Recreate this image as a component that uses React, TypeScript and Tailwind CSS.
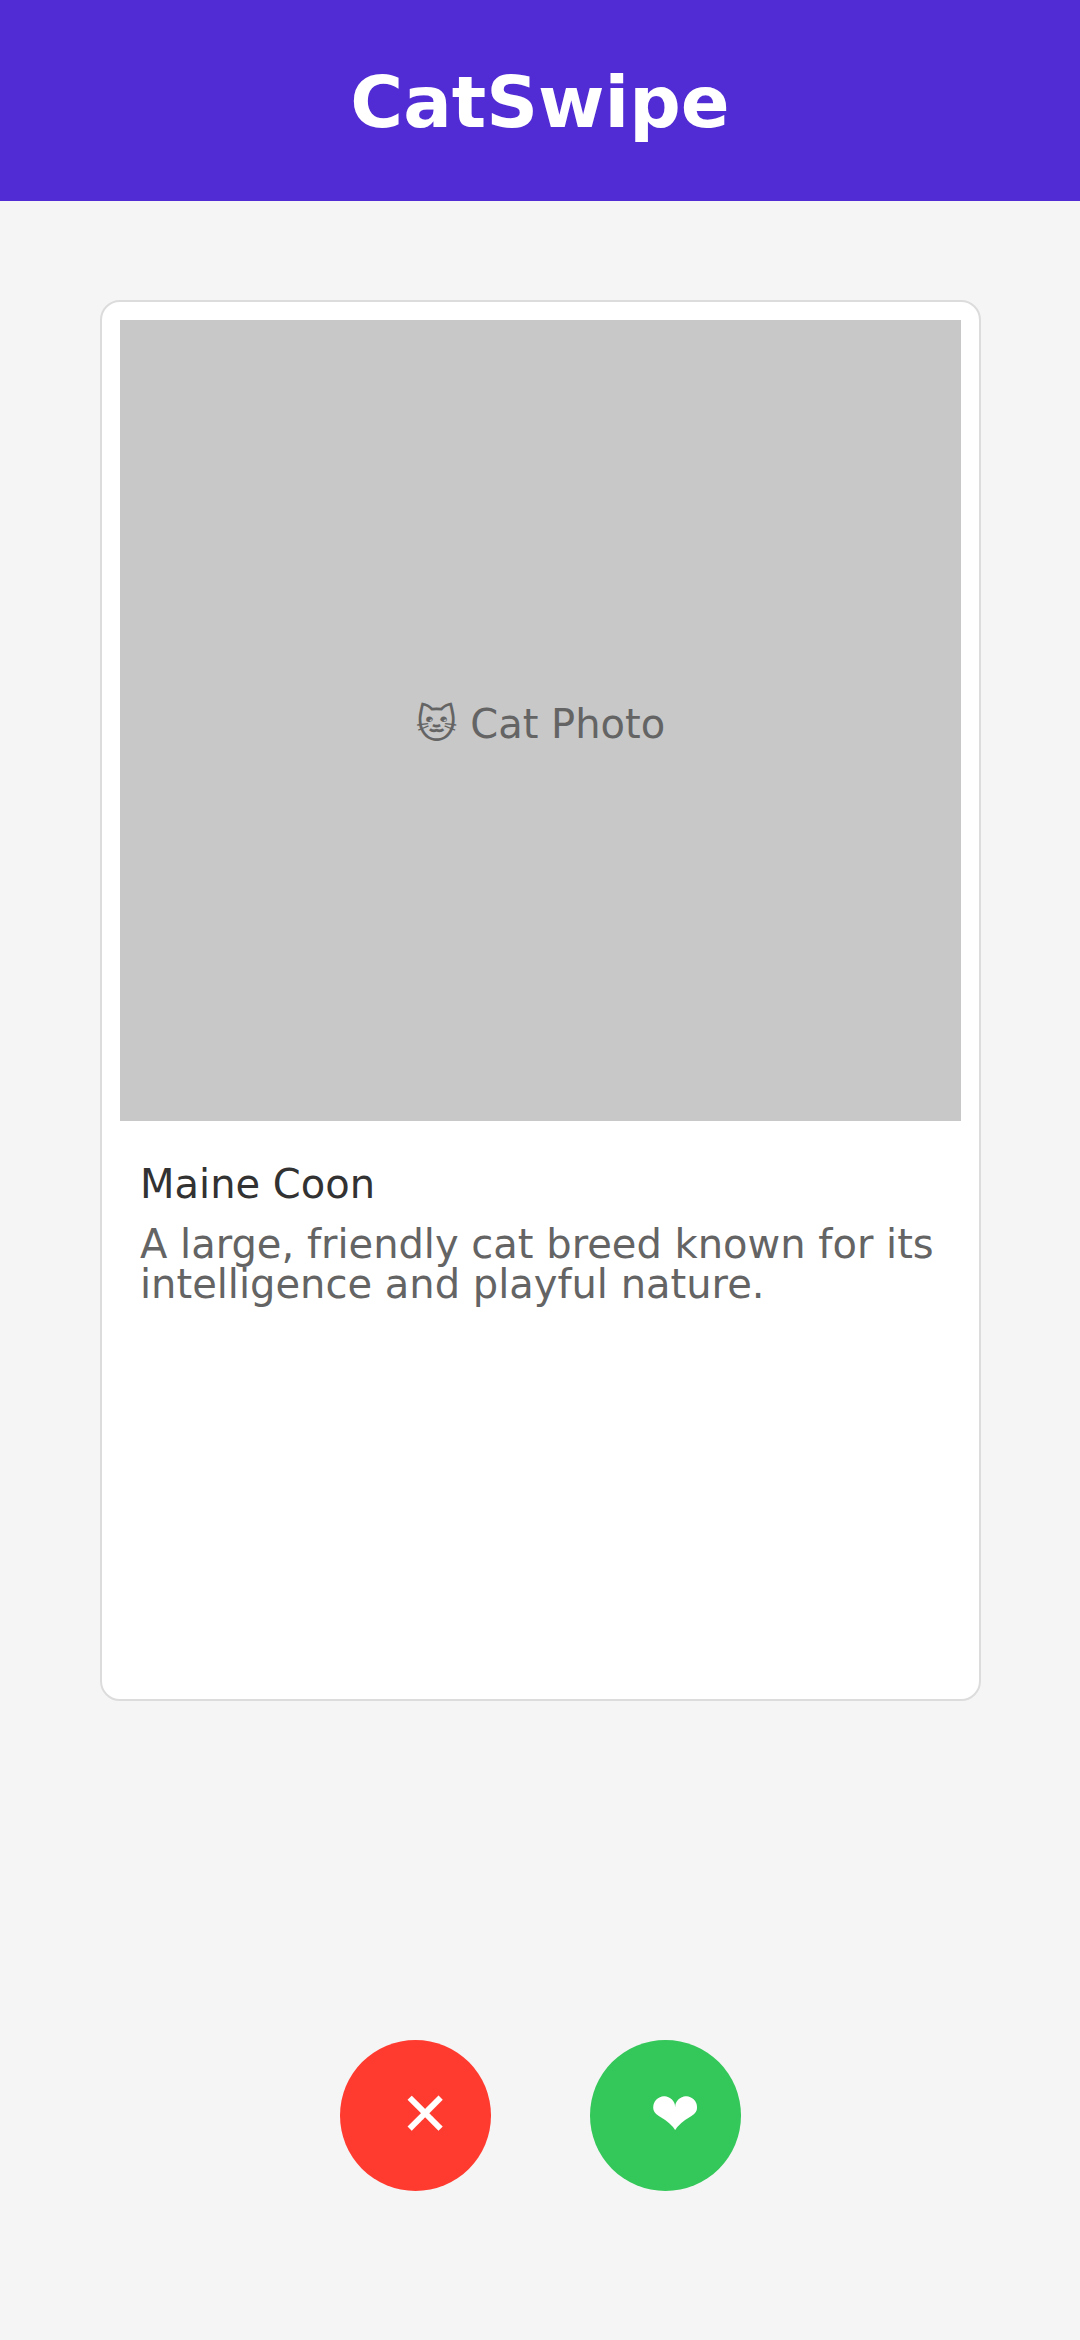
export default function App() {
  return (
    <div className="flex h-[2340px] w-[1080px] flex-col bg-[#f5f5f5] font-['DejaVu_Sans',sans-serif]">
      <header className="flex h-[201px] shrink-0 justify-center bg-[#512bd4] pt-[60px] text-[72px] leading-[84px] font-bold text-white">
        <h1>CatSwipe</h1>
      </header>
      <main className="ml-[100px] mt-[99px] flex h-[1401px] w-[881px] shrink-0 flex-col rounded-[20px] border-2 border-[#dcdcdc] bg-white p-[18px]">
        <div className="flex h-[801px] shrink-0 justify-center bg-[#c8c8c8] pt-[381px] text-[40px] leading-[46px] text-[#646464]">🐱︎ Cat Photo</div>
        <h2 className="ml-5 mt-10 text-[40px] leading-[46px] text-[#323232]">Maine Coon</h2>
        <p className="ml-5 mt-[17px] whitespace-nowrap text-[40px] leading-[40px] text-[#646464]">A large, friendly cat breed known for its<br />intelligence and playful nature.</p>
      </main>
      <div className="ml-[340px] mt-[339px] flex gap-[99px]">
        <button aria-label="Dislike" className="h-[151px] w-[151px] rounded-full bg-[#ff3b30] pb-[3px] pl-[60px] text-left text-[60px] leading-[70px] text-white">✕</button>
        <button aria-label="Like" className="h-[151px] w-[151px] rounded-full bg-[#34c759] pb-[3px] pl-[60px] text-left text-[60px] leading-[70px] text-white">❤︎</button>
      </div>
    </div>
  );
}
